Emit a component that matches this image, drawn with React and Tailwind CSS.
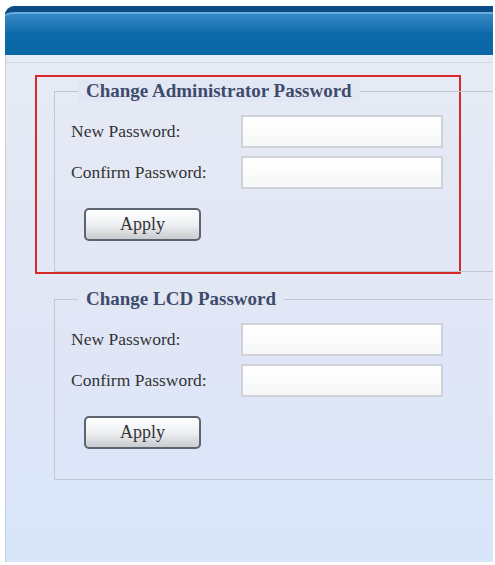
import React from 'react';

function Field({ label }) {
  return (
    <div className="flex items-center h-[41px]">
      <span className="w-[170px] text-[17.5px] text-[#333333]">{label}</span>
      <div className="w-[202px] h-[33px] border-2 border-[#cfd2d8] bg-gradient-to-b from-white to-[#f6f7f7]" />
    </div>
  );
}

function Section({ title }) {
  return (
    <div className="relative ml-[48px] border-l border-t border-b border-[#c2c7d2] pt-[19px] pb-[30px] pl-[16px]">
      <div className="absolute -top-[12px] left-[23px] px-[8px] bg-[#e2e7f4] text-[19px] font-bold text-[#3e4c6c] leading-[22px]">
        {title}
      </div>
      <Field label="New Password:" />
      <Field label="Confirm Password:" />
      <div className="pt-[15px] pl-[13px]">
        <button className="w-[117px] h-[33px] rounded-[5px] border-2 border-[#5c6470] bg-gradient-to-b from-white via-[#eef0f2] to-[#c9ccd0] text-[18px] text-[#333333]">
          Apply
        </button>
      </div>
    </div>
  );
}

export default function App() {
  return (
    <div className="w-[495px] h-[565px] bg-white pt-[6px] font-['Liberation_Serif',serif]">
      <div className="ml-[5px] w-[488px] h-[49px] rounded-tl-[9px] border-t-[6px] border-[#0b4a82] bg-gradient-to-b from-[#3a8cc8] via-[#0c6aab] to-[#0b66a5] shadow-[inset_0_2px_0_#6aaee0]" />
      <div className="ml-[5px] w-[488px] h-[507px] border-l border-[#c9cdd6] bg-gradient-to-b from-[#e6ebf5] via-[#e2e6f6] to-[#d8e6fa] pt-[7px]">
        <div className="border-t border-[#d3d8e4] pt-[14px]">
          <div className="relative">
            <div className="absolute left-[29px] -top-[2px] w-[426px] h-[199px] border-2 border-[#d42a2a] pointer-events-none" />
            <div className="pt-[14px]">
              <Section title="Change Administrator Password" />
            </div>
          </div>
          <div className="pt-[27px]">
            <Section title="Change LCD Password" />
          </div>
        </div>
      </div>
    </div>
  );
}
